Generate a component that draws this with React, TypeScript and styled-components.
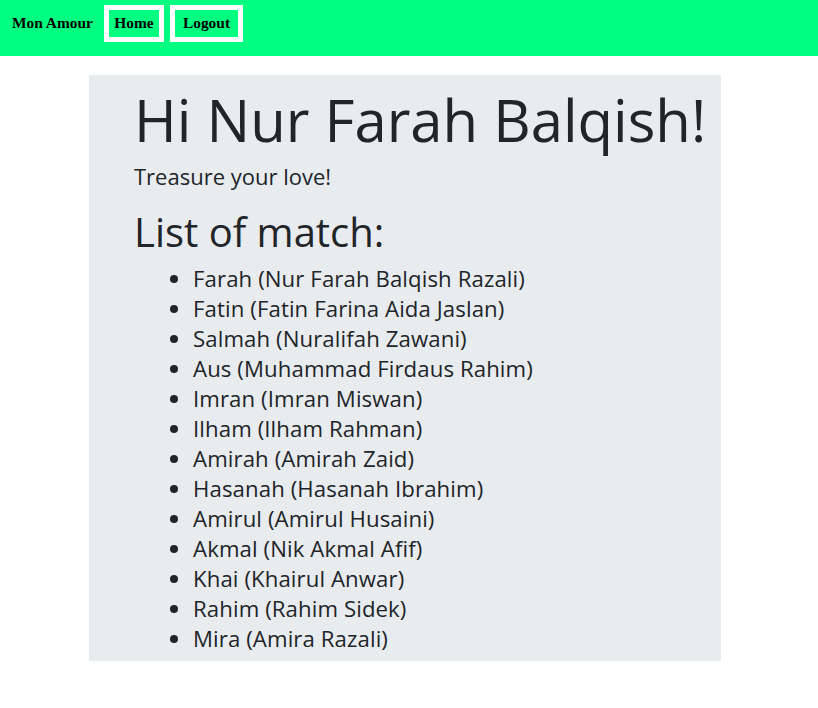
import React from "react";
import styled, { createGlobalStyle } from "styled-components";

const GlobalStyle = createGlobalStyle`
  html, body { margin: 0; padding: 0; background: #ffffff; }
  body { font-family: "Open Sans", "Noto Sans", sans-serif; color: #212529; }
`;

const NavBar = styled.nav`
  height: 56px;
  background: #00ff80;
  display: flex;
  align-items: flex-start;
  padding: 5px 0 0 12px;
  box-sizing: border-box;
  font-family: "Liberation Serif", "Times New Roman", serif;
  font-weight: bold;
  font-size: 15.4px;
  color: #000;
`;

const Brand = styled.span`
  line-height: 36px;
  width: 80px;
  margin-right: 12px;
  white-space: nowrap;
`;

const NavButton = styled.span<{ $w: number }>`
  box-sizing: border-box;
  width: ${(p) => p.$w}px;
  height: 37px;
  line-height: 26px;
  text-align: center;
  border: 5px solid #ffffff;
  margin-right: 6px;
`;

const Jumbotron = styled.main`
  margin: 19px 0 0 89px;
  width: 632px;
  height: 586px;
  box-sizing: border-box;
  background: #e9ecef;
  padding: 10px 0 0 45px;
`;

const Title = styled.h1`
  margin: 0;
  font-size: 58px;
  font-weight: 400;
  line-height: 70px;
  white-space: nowrap;
`;

const Lead = styled.p`
  margin: 6px 0 0;
  font-size: 22px;
  line-height: 30px;
`;

const Subtitle = styled.h2`
  margin: 17px 0 0;
  font-size: 40px;
  font-weight: 400;
  line-height: 48px;
`;

const List = styled.ul`
  margin: 8px 0 0;
  padding-left: 59px;
  font-size: 22.2px;
  line-height: 30px;
  letter-spacing: 0.1px;
`;

const Item = styled.li``;

const matches = [
  "Farah (Nur Farah Balqish Razali)",
  "Fatin (Fatin Farina Aida Jaslan)",
  "Salmah (Nuralifah Zawani)",
  "Aus (Muhammad Firdaus Rahim)",
  "Imran (Imran Miswan)",
  "Ilham (Ilham Rahman)",
  "Amirah (Amirah Zaid)",
  "Hasanah (Hasanah Ibrahim)",
  "Amirul (Amirul Husaini)",
  "Akmal (Nik Akmal Afif)",
  "Khai (Khairul Anwar)",
  "Rahim (Rahim Sidek)",
  "Mira (Amira Razali)",
];

export default function App() {
  return (
    <>
      <GlobalStyle />
      <NavBar>
        <Brand>Mon Amour</Brand>
        <NavButton $w={60}>Home</NavButton>
        <NavButton $w={73}>Logout</NavButton>
      </NavBar>
      <Jumbotron>
        <Title>Hi Nur Farah Balqish!</Title>
        <Lead>Treasure your love!</Lead>
        <Subtitle>List of match:</Subtitle>
        <List>
          {matches.map((m) => (
            <Item key={m}>{m}</Item>
          ))}
        </List>
      </Jumbotron>
    </>
  );
}
